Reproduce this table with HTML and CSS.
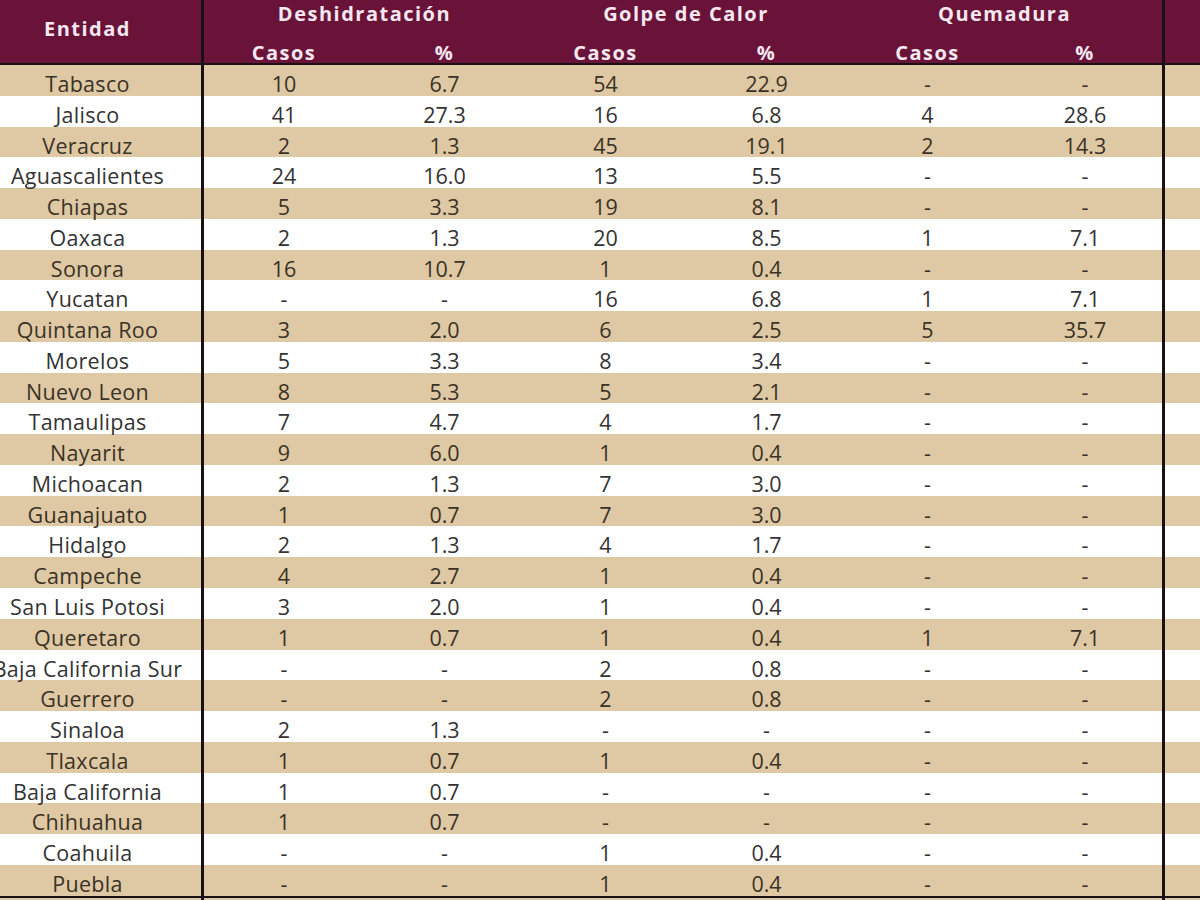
FILE: index.html
```html
<!DOCTYPE html>
<html lang="es">
<head>
<meta charset="utf-8">
<title>Casos por entidad</title>
<link rel="stylesheet" href="styles.css">
</head>
<body>
<div class="sheet">
  <div class="head">
    <div class="h-ent">Entidad</div>
    <div class="h-grp g1">Deshidratación</div>
    <div class="h-grp g2">Golpe de Calor</div>
    <div class="h-grp g3">Quemadura</div>
    <div class="h-tail"></div>
    <div class="h-sub s1">Casos</div>
    <div class="h-sub s2">%</div>
    <div class="h-sub s3">Casos</div>
    <div class="h-sub s4">%</div>
    <div class="h-sub s5">Casos</div>
    <div class="h-sub s6">%</div>
  </div>
  <div class="body" id="rows">
    <div class="row"><div class="ent"><span>Tabasco</span></div><div class="c">10</div><div class="c">6.7</div><div class="c">54</div><div class="c">22.9</div><div class="c">-</div><div class="c">-</div><div class="tail"></div></div>
    <div class="row"><div class="ent"><span>Jalisco</span></div><div class="c">41</div><div class="c">27.3</div><div class="c">16</div><div class="c">6.8</div><div class="c">4</div><div class="c">28.6</div><div class="tail"></div></div>
    <div class="row"><div class="ent"><span>Veracruz</span></div><div class="c">2</div><div class="c">1.3</div><div class="c">45</div><div class="c">19.1</div><div class="c">2</div><div class="c">14.3</div><div class="tail"></div></div>
    <div class="row"><div class="ent"><span>Aguascalientes</span></div><div class="c">24</div><div class="c">16.0</div><div class="c">13</div><div class="c">5.5</div><div class="c">-</div><div class="c">-</div><div class="tail"></div></div>
    <div class="row"><div class="ent"><span>Chiapas</span></div><div class="c">5</div><div class="c">3.3</div><div class="c">19</div><div class="c">8.1</div><div class="c">-</div><div class="c">-</div><div class="tail"></div></div>
    <div class="row"><div class="ent"><span>Oaxaca</span></div><div class="c">2</div><div class="c">1.3</div><div class="c">20</div><div class="c">8.5</div><div class="c">1</div><div class="c">7.1</div><div class="tail"></div></div>
    <div class="row"><div class="ent"><span>Sonora</span></div><div class="c">16</div><div class="c">10.7</div><div class="c">1</div><div class="c">0.4</div><div class="c">-</div><div class="c">-</div><div class="tail"></div></div>
    <div class="row"><div class="ent"><span>Yucatan</span></div><div class="c">-</div><div class="c">-</div><div class="c">16</div><div class="c">6.8</div><div class="c">1</div><div class="c">7.1</div><div class="tail"></div></div>
    <div class="row"><div class="ent"><span>Quintana Roo</span></div><div class="c">3</div><div class="c">2.0</div><div class="c">6</div><div class="c">2.5</div><div class="c">5</div><div class="c">35.7</div><div class="tail"></div></div>
    <div class="row"><div class="ent"><span>Morelos</span></div><div class="c">5</div><div class="c">3.3</div><div class="c">8</div><div class="c">3.4</div><div class="c">-</div><div class="c">-</div><div class="tail"></div></div>
    <div class="row"><div class="ent"><span>Nuevo Leon</span></div><div class="c">8</div><div class="c">5.3</div><div class="c">5</div><div class="c">2.1</div><div class="c">-</div><div class="c">-</div><div class="tail"></div></div>
    <div class="row"><div class="ent"><span>Tamaulipas</span></div><div class="c">7</div><div class="c">4.7</div><div class="c">4</div><div class="c">1.7</div><div class="c">-</div><div class="c">-</div><div class="tail"></div></div>
    <div class="row"><div class="ent"><span>Nayarit</span></div><div class="c">9</div><div class="c">6.0</div><div class="c">1</div><div class="c">0.4</div><div class="c">-</div><div class="c">-</div><div class="tail"></div></div>
    <div class="row"><div class="ent"><span>Michoacan</span></div><div class="c">2</div><div class="c">1.3</div><div class="c">7</div><div class="c">3.0</div><div class="c">-</div><div class="c">-</div><div class="tail"></div></div>
    <div class="row"><div class="ent"><span>Guanajuato</span></div><div class="c">1</div><div class="c">0.7</div><div class="c">7</div><div class="c">3.0</div><div class="c">-</div><div class="c">-</div><div class="tail"></div></div>
    <div class="row"><div class="ent"><span>Hidalgo</span></div><div class="c">2</div><div class="c">1.3</div><div class="c">4</div><div class="c">1.7</div><div class="c">-</div><div class="c">-</div><div class="tail"></div></div>
    <div class="row"><div class="ent"><span>Campeche</span></div><div class="c">4</div><div class="c">2.7</div><div class="c">1</div><div class="c">0.4</div><div class="c">-</div><div class="c">-</div><div class="tail"></div></div>
    <div class="row"><div class="ent"><span>San Luis Potosi</span></div><div class="c">3</div><div class="c">2.0</div><div class="c">1</div><div class="c">0.4</div><div class="c">-</div><div class="c">-</div><div class="tail"></div></div>
    <div class="row"><div class="ent"><span>Queretaro</span></div><div class="c">1</div><div class="c">0.7</div><div class="c">1</div><div class="c">0.4</div><div class="c">1</div><div class="c">7.1</div><div class="tail"></div></div>
    <div class="row"><div class="ent"><span>Baja California Sur</span></div><div class="c">-</div><div class="c">-</div><div class="c">2</div><div class="c">0.8</div><div class="c">-</div><div class="c">-</div><div class="tail"></div></div>
    <div class="row"><div class="ent"><span>Guerrero</span></div><div class="c">-</div><div class="c">-</div><div class="c">2</div><div class="c">0.8</div><div class="c">-</div><div class="c">-</div><div class="tail"></div></div>
    <div class="row"><div class="ent"><span>Sinaloa</span></div><div class="c">2</div><div class="c">1.3</div><div class="c">-</div><div class="c">-</div><div class="c">-</div><div class="c">-</div><div class="tail"></div></div>
    <div class="row"><div class="ent"><span>Tlaxcala</span></div><div class="c">1</div><div class="c">0.7</div><div class="c">1</div><div class="c">0.4</div><div class="c">-</div><div class="c">-</div><div class="tail"></div></div>
    <div class="row"><div class="ent"><span>Baja California</span></div><div class="c">1</div><div class="c">0.7</div><div class="c">-</div><div class="c">-</div><div class="c">-</div><div class="c">-</div><div class="tail"></div></div>
    <div class="row"><div class="ent"><span>Chihuahua</span></div><div class="c">1</div><div class="c">0.7</div><div class="c">-</div><div class="c">-</div><div class="c">-</div><div class="c">-</div><div class="tail"></div></div>
    <div class="row"><div class="ent"><span>Coahuila</span></div><div class="c">-</div><div class="c">-</div><div class="c">1</div><div class="c">0.4</div><div class="c">-</div><div class="c">-</div><div class="tail"></div></div>
    <div class="row"><div class="ent"><span>Puebla</span></div><div class="c">-</div><div class="c">-</div><div class="c">1</div><div class="c">0.4</div><div class="c">-</div><div class="c">-</div><div class="tail"></div></div>
  </div>
</div>
</body>
</html>
```
FILE: styles.css
```css
html, body {
  margin: 0;
  padding: 0;
}
body {
  width: 1200px;
  height: 900px;
  overflow: hidden;
  background: #d9c6a4;
  font-family: "Open Sans", "Noto Sans", "Liberation Sans", sans-serif;
}
.sheet {
  width: 1200px;
}
.head {
  display: grid;
  grid-template-columns: 204px 160px 161px 161px 161px 161px 154px 1fr;
  grid-template-rows: 28px 35px;
  background: #691339;
  color: #f6e8f0;
  font-weight: 700;
  border-bottom: 2px solid #1a1014;
  letter-spacing: 1.5px;
}
.h-ent {
  grid-column: 1;
  grid-row: 1 / span 2;
  border-right: 3px solid #1a1014;
  font-size: 20px;
  display: flex;
  justify-content: center;
  padding-right: 26px;
  padding-top: 15px;
  line-height: 28px;
}
.h-grp {
  grid-row: 1;
  font-size: 20px;
  line-height: 28px;
  text-align: center;
}
.g1 { grid-column: 2 / span 2; }
.g2 { grid-column: 4 / span 2; }
.g3 { grid-column: 6 / span 2; }
.h-tail {
  grid-column: 8;
  grid-row: 1 / span 2;
  border-left: 3px solid #1a1014;
}
.h-sub {
  grid-row: 2;
  font-size: 20px;
  line-height: 20px;
  align-self: end;
  text-align: center;
}
.s1 { grid-column: 2; }
.s2 { grid-column: 3; }
.s3 { grid-column: 4; }
.s4 { grid-column: 5; }
.s5 { grid-column: 6; }
.s6 { grid-column: 7; }

.row {
  display: grid;
  grid-template-columns: 204px 160px 161px 161px 161px 161px 154px 1fr;
  height: 30.78px;
  font-size: 21.5px;
  line-height: 30.78px;
  color: #333333;
  background: #ffffff;
}
.row:nth-child(odd) {
  background: #dfc9a4;
  color: #3a3226;
}
.row:last-child {
  border-bottom: 2px solid #1a1014;
}
.ent {
  border-right: 3px solid #1a1014;
  display: flex;
  justify-content: center;
  padding-right: 26px;
  padding-top: 4px;
  white-space: nowrap;
  letter-spacing: 0.3px;
}
.c {
  text-align: center;
  padding-top: 4px;
}
.tail {
  border-left: 3px solid #1a1014;
}
```
